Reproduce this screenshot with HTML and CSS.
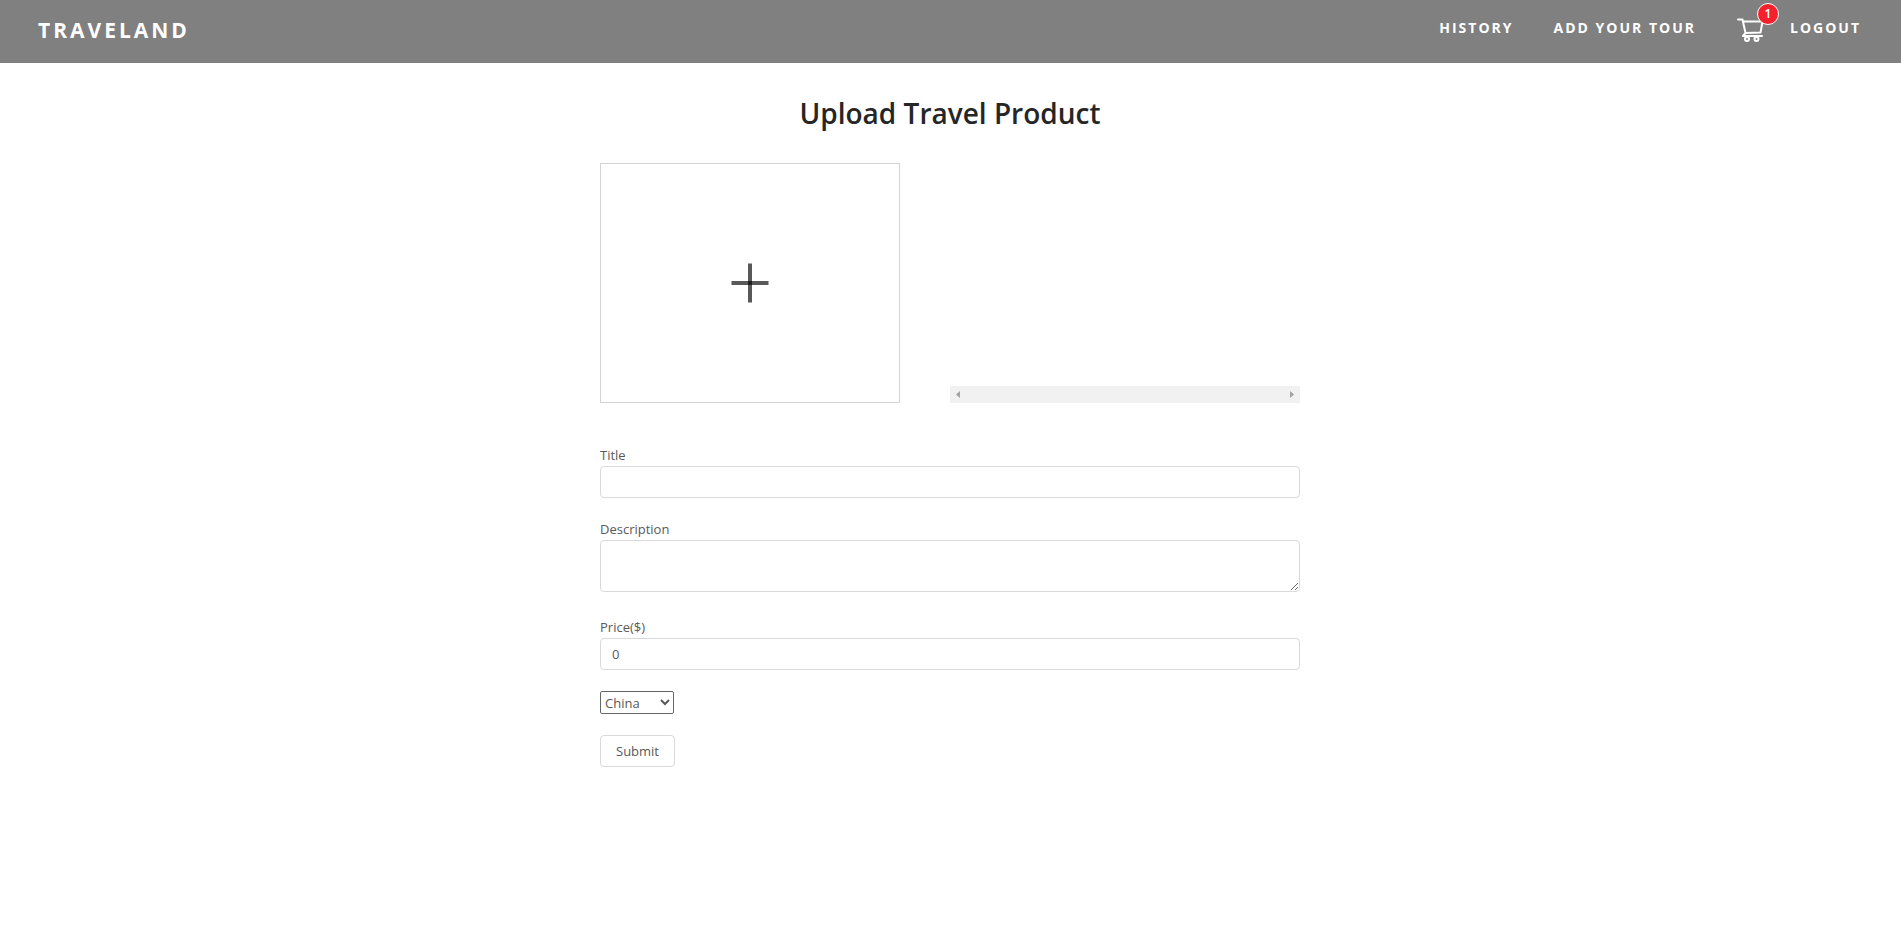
FILE: index.html
```html
<!DOCTYPE html>
<html lang="en">
<head>
<meta charset="utf-8">
<title>Traveland</title>
<link rel="stylesheet" href="styles.css">
</head>
<body>
<header class="header">
  <a class="brand" href="#">TRAVELAND</a>
  <nav class="nav">
    <a class="nav-link" href="#">HISTORY</a>
    <a class="nav-link" href="#">ADD YOUR TOUR</a>
    <a class="cart" href="#" aria-label="Cart">
      <svg class="cart-icon" viewBox="0 0 28 28" fill="none" stroke="currentColor" stroke-width="2" stroke-linecap="round" stroke-linejoin="round">
        <path d="M2 3.500h4.500L9.500 17 7 20H26M7 5.500H26.500L24.500 16.500 9.500 17"/>
        <circle cx="11" cy="23" r="2"/>
        <circle cx="20.500" cy="23" r="2"/>
      </svg>
      <span class="badge">1</span>
    </a>
    <a class="nav-link" href="#">LOGOUT</a>
  </nav>
</header>
<main class="page">
  <h2 class="title">Upload Travel Product</h2>
  <form class="form">
    <div class="upload-row">
      <button class="dropzone" type="button" aria-label="Add image">
        <svg class="plus-icon" viewBox="0 0 40 40">
          <path d="M18 .5h4v39h-4z"/>
          <path d="M1.500 18h37v4h-37z"/>
        </svg>
      </button>
      <div class="preview">
        <div class="scrollbar">
          <button class="scroll-arrow" type="button" aria-label="Scroll left"><svg class="arrow-icon" viewBox="0 0 17 17"><path d="M10 5v7L6 8.500z"/></svg></button>
          <button class="scroll-arrow" type="button" aria-label="Scroll right"><svg class="arrow-icon" viewBox="0 0 17 17"><path d="M7 5v7l4-3.500z"/></svg></button>
        </div>
      </div>
    </div>
    <div class="field">
      <label class="label" for="title">Title</label>
      <input class="input" id="title" type="text">
    </div>
    <div class="field">
      <label class="label" for="description">Description</label>
      <textarea class="input textarea" id="description"></textarea>
    </div>
    <div class="field">
      <label class="label" for="price">Price($)</label>
      <input class="input" id="price" type="text" inputmode="numeric" value="0">
    </div>
    <select class="select" aria-label="Country"><option>China</option></select>
    <button class="submit" type="submit">Submit</button>
  </form>
</main>
</body>
</html>
```
FILE: styles.css
```css
* { box-sizing: border-box; }

body {
  margin: 0;
  background: #fff;
  color: #595959;
  font: 13px/22px "Segoe UI", "Open Sans", sans-serif;
}

a { color: inherit; text-decoration: none; }

.header {
  display: flex;
  justify-content: space-between;
  align-items: flex-start;
  height: 63px;
  padding: 0 40px 0 38px;
  background: #808080;
  color: #fff;
}

.brand {
  padding-top: 15px;
  font-size: 21px;
  line-height: 30px;
  font-weight: 700;
  letter-spacing: 3px;
}

.nav {
  display: flex;
  align-items: center;
  height: 56px;
}

.nav-link {
  font-size: 14px;
  font-weight: 700;
  letter-spacing: 2px;
}

.nav-link + .nav-link { margin-left: 40px; }

.cart {
  position: relative;
  display: flex;
  margin: 4px 26px 0 40px;
}

.cart-icon { width: 28px; height: 28px; }

.badge {
  position: absolute;
  top: -13px;
  right: -15px;
  width: 22px;
  height: 22px;
  border: 1px solid #fff;
  border-radius: 50%;
  background: #f5222d;
  font-size: 12px;
  line-height: 20px;
  font-weight: 600;
  text-align: center;
}

.page {
  max-width: 701px;
  margin: 0 auto;
  padding: 30px 1px 0 0;
}

.title {
  margin: 0 0 30px;
  color: #262626;
  font-size: 28px;
  line-height: 40px;
  font-weight: 600;
  text-align: center;
}

.form {
  display: flex;
  flex-direction: column;
  align-items: flex-start;
}

.upload-row {
  display: flex;
  gap: 50px;
  width: 100%;
  margin-bottom: 42px;
}

.dropzone {
  display: flex;
  align-items: center;
  justify-content: center;
  width: 300px;
  height: 240px;
  padding: 0;
  border: 1px solid #d3d3d3;
  background: #fff;
}

.plus-icon {
  width: 40px;
  height: 40px;
  fill: #000;
  fill-opacity: 0.65;
}

.preview {
  display: flex;
  flex: 1;
  align-items: flex-end;
}

.scrollbar {
  display: flex;
  flex: 1;
  justify-content: space-between;
  background: #f1f1f1;
}

.scroll-arrow {
  display: flex;
  width: 17px;
  height: 17px;
  padding: 0;
  border: 0;
  background: none;
}

.arrow-icon { width: 17px; height: 17px; fill: #a3a3a3; }

.field {
  display: flex;
  flex-direction: column;
  width: 100%;
  margin-bottom: 21px;
}

.label { line-height: 21px; }

.input {
  width: 100%;
  height: 32px;
  padding: 4px 11px;
  border: 1px solid #d9d9d9;
  border-radius: 4px;
  background: #fff;
  color: #595959;
  font: inherit;
}

.textarea {
  height: 52px;
  margin-bottom: 4px;
  resize: vertical;
}

.select {
  width: 74px;
  height: 23px;
  margin-bottom: 21px;
  background: #fff;
  color: #595959;
  padding: 0;
  font: inherit;
  border: 1px solid #666;
  border-radius: 2px;
}

.submit {
  height: 32px;
  padding: 0 15px;
  border: 1px solid #d9d9d9;
  border-radius: 4px;
  background: #fff;
  box-shadow: 0 2px 0 rgba(0, 0, 0, 0.016);
  color: #595959;
  font: inherit;
}
```
